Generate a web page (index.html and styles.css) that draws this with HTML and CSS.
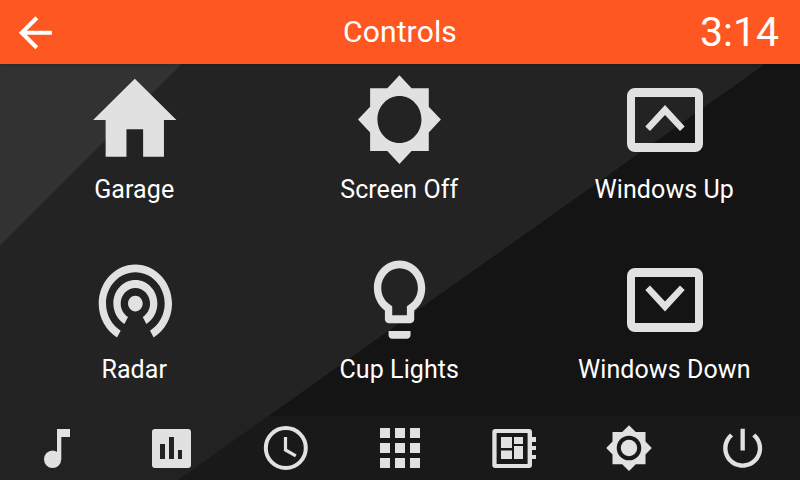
FILE: index.html
```
<!DOCTYPE html>
<html lang="en">
<head>
<meta charset="utf-8">
<title>Controls</title>
<link rel="stylesheet" href="styles.css">
</head>
<body>
<div class="screen">
  <svg class="backdrop" viewBox="0 0 800 480" aria-hidden="true">
    <path fill="#323232" d="M0 64h181.500L0 245.500z"/>
    <path fill="#141414" d="M765 64L178 480h622V64z"/>
  </svg>
  <header class="topbar">
    <svg class="back" viewBox="0.2 0 24 24"><path d="M20 11H7.830l5.590-5.590L12 4l-8 8 8 8 1.410-1.410L7.830 13H20v-2z"/></svg>
    <h1 class="title">Controls</h1>
    <span class="time">3:14</span>
  </header>
  <main class="controls">
    <div class="control">
      <div class="slot"><svg class="home" viewBox="0.05 0 24 24" preserveAspectRatio="none"><path d="M10 20v-6h4v6h5v-8h3L12 3 2 12h3v8z"/></svg></div>
      <span class="label">Garage</span>
    </div>
    <div class="control">
      <div class="slot"><svg class="large" viewBox="0.150 0.100 24 24" preserveAspectRatio="none"><path d="M20 15.310L23.310 12 20 8.690V4h-4.690L12 .69 8.690 4H4v4.690L.69 12 4 15.310V20h4.690L12 23.310 15.310 20H20v-4.690zM12 18c-3.310 0-6-2.690-6-6s2.690-6 6-6 6 2.690 6 6-2.690 6-6 6z"/></svg></div>
      <span class="label">Screen Off</span>
    </div>
    <div class="control">
      <div class="slot"><svg class="window" viewBox="0 0 76 64"><path fill-rule="evenodd" d="M8 0h60a8 8 0 0 1 8 8v48a8 8 0 0 1-8 8H8a8 8 0 0 1-8-8V8a8 8 0 0 1 8-8zM8 9v46h60V9z"/><path d="M38 17l19.700 21.500-4.700 4.500-15-16-15 16-4.700-4.500z"/></svg></div>
      <span class="label">Windows Up</span>
    </div>
    <div class="control">
      <div class="slot"><svg class="large" viewBox="-0.100 0.080 24 24" preserveAspectRatio="none"><path d="M12 11c-1.100 0-2 .9-2 2s.9 2 2 2 2-.9 2-2-.9-2-2-2zm6 2c0-3.310-2.690-6-6-6s-6 2.690-6 6c0 2.220 1.210 4.150 3 5.190l1-1.740c-1.190-.7-2-1.970-2-3.450 0-2.210 1.790-4 4-4s4 1.790 4 4c0 1.480-.81 2.750-2 3.450l1 1.740c1.790-1.040 3-2.970 3-5.190zM12 3C6.480 3 2 7.480 2 13c0 3.700 2.010 6.920 4.990 8.650l1-1.730C5.610 18.530 4 15.960 4 13c0-4.420 3.580-8 8-8s8 3.580 8 8c0 2.960-1.610 5.530-4 6.920l1 1.730c2.990-1.730 5-4.950 5-8.650 0-5.520-4.480-10-10-10z"/></svg></div>
      <span class="label">Radar</span>
    </div>
    <div class="control">
      <div class="slot"><svg class="large" viewBox="0.120 0.080 24 24" preserveAspectRatio="none"><path d="M9 21c0 .55.45 1 1 1h4c.55 0 1-.45 1-1v-1H9v1zm3-19C8.140 2 5 5.140 5 9c0 2.380 1.190 4.470 3 5.740V17c0 .55.45 1 1 1h6c.55 0 1-.45 1-1v-2.260c1.810-1.270 3-3.360 3-5.740 0-3.860-3.140-7-7-7zm2.850 11.100l-.85.6V16h-4v-2.300l-.85-.6C7.800 12.160 7 10.630 7 9c0-2.760 2.240-5 5-5s5 2.240 5 5c0 1.630-.8 3.160-2.150 4.100z"/></svg></div>
      <span class="label">Cup Lights</span>
    </div>
    <div class="control">
      <div class="slot"><svg class="window" viewBox="0 0 76 64"><path fill-rule="evenodd" d="M8 0h60a8 8 0 0 1 8 8v48a8 8 0 0 1-8 8H8a8 8 0 0 1-8-8V8a8 8 0 0 1 8-8zM8 9v46h60V9z"/><path d="M38 43.500l19.700-21.500-4.700-4.500-15 16-15-16-4.700 4.500z"/></svg></div>
      <span class="label">Windows Down</span>
    </div>
  </main>
  <nav class="dock">
    <svg viewBox="0 0 52 52"><ellipse cx="21.600" cy="37.300" rx="8.600" ry="8.800"/><path d="M26 7h13v8h-8.700v22.300H26z"/></svg>
    <svg viewBox="0 0 52 52"><path fill-rule="evenodd" d="M10 7h33a3 3 0 0 1 3 3v33a3 3 0 0 1-3 3H10a3 3 0 0 1-3-3V10a3 3 0 0 1 3-3zM15 22v15h5V22zM24 15v22h5V15zM33 28v9h4v-9z"/></svg>
    <svg viewBox="0 0 52 52"><circle class="line" cx="25.800" cy="26" r="20"/><path class="hand" d="M25.500 15v13l10.300 5.800"/></svg>
    <svg viewBox="0 0 52 52"><path d="M6 6h10v10H6zM21 6h10v10H21zM36 6h10v10H36zM6 21h10v10H6zM21 21h10v10H21zM36 21h10v10H36zM6 36h10v10H6zM21 36h10v10H21zM36 36h10v10H36z"/></svg>
    <svg viewBox="0 0 52 52"><path fill-rule="evenodd" d="M7.300 7h33.700a3 3 0 0 1 3 3v33a3 3 0 0 1-3 3H7.300a3 3 0 0 1-3-3V10a3 3 0 0 1 3-3zM8.600 11v31H39.600V11z"/><path d="M44 15h4v5h-4zM44 24h4v4h-4zM44 33h4v4h-4zM13 15h11v11H13zM26 15h9v7h-9zM13 28.500h11V37H13zM26 24h9v13h-9z"/></svg>
    <svg viewBox="0 0 52 52"><path fill-rule="evenodd" d="M26 3.200l6.800 6.800h9.700v9.500L48.800 26l-6.300 6.500v9.800h-9.700L26 49l-6.800-6.700H9.500v-9.800L3.200 26l6.300-6.500V10h9.700zM26 13.700a12.300 12.300 0 1 0 0 24.600 12.300 12.300 0 1 0 0-24.600z"/><circle cx="26" cy="26" r="8.200"/></svg>
    <svg viewBox="0.150 -0.150 24 24"><path d="M13 3h-2v10h2V3zm4.830 2.170l-1.420 1.420C17.990 7.860 19 9.810 19 12c0 3.870-3.130 7-7 7s-7-3.130-7-7c0-2.190 1.010-4.140 2.580-5.420L6.170 5.170C4.230 6.820 3 9.260 3 12c0 4.970 4.030 9 9 9s9-4.030 9-9c0-2.740-1.230-5.180-3.170-6.830z"/></svg>
  </nav>
</div>
</body>
</html>
```
FILE: styles.css
```
* { box-sizing: border-box; }
body { margin: 0; }

.screen {
  position: relative;
  isolation: isolate;
  display: flex;
  flex-direction: column;
  width: 800px;
  height: 480px;
  overflow: hidden;
  background: #232323;
  color: #fff;
  font-family: Roboto, "Liberation Sans", sans-serif;
}

.backdrop {
  position: absolute;
  inset: 0;
  z-index: -1;
  width: 100%;
  height: 100%;
}

svg { display: block; fill: #e1e1e1; }

.topbar {
  display: grid;
  grid-template-columns: 1fr auto 1fr;
  align-items: center;
  height: 64px;
  padding: 0 21px 0 11px;
  background: #ff5722;
  box-shadow: 0 1px 3px rgba(0, 0, 0, 0.15);
}
.back { width: 49.500px; height: 49.500px; margin-top: 2px; fill: #fff; }
.title {
  margin: 0 0 0 10px;
  font-size: 30px;
  font-weight: 400;
  line-height: 64px;
  letter-spacing: 0.150px;
}
.time { justify-self: end; font-size: 41px; line-height: 64px; }

.controls {
  display: grid;
  grid-template-columns: repeat(3, 265px);
  grid-template-rows: 180px 172px;
  justify-content: center;
  height: 352px;
}
.control { display: flex; flex-direction: column; align-items: center; }
.slot { display: flex; align-items: center; height: 112px; }
.label { margin-right: 1.500px; font-size: 25px; line-height: 28px; letter-spacing: 0.080px; }
.home { width: 100px; height: 110px; }
.large { width: 88px; height: 94px; }
.window { width: 76px; height: 64px; }

.dock {
  display: grid;
  grid-template-columns: repeat(7, 1fr);
  place-items: center;
  height: 64px;
  background: rgba(33, 33, 33, 0.4);
}
.dock svg { width: 52px; height: 52px; }
.line { fill: none; stroke: #e1e1e1; stroke-width: 4; }
.hand { fill: none; stroke: #e1e1e1; stroke-width: 3.200; }
```
